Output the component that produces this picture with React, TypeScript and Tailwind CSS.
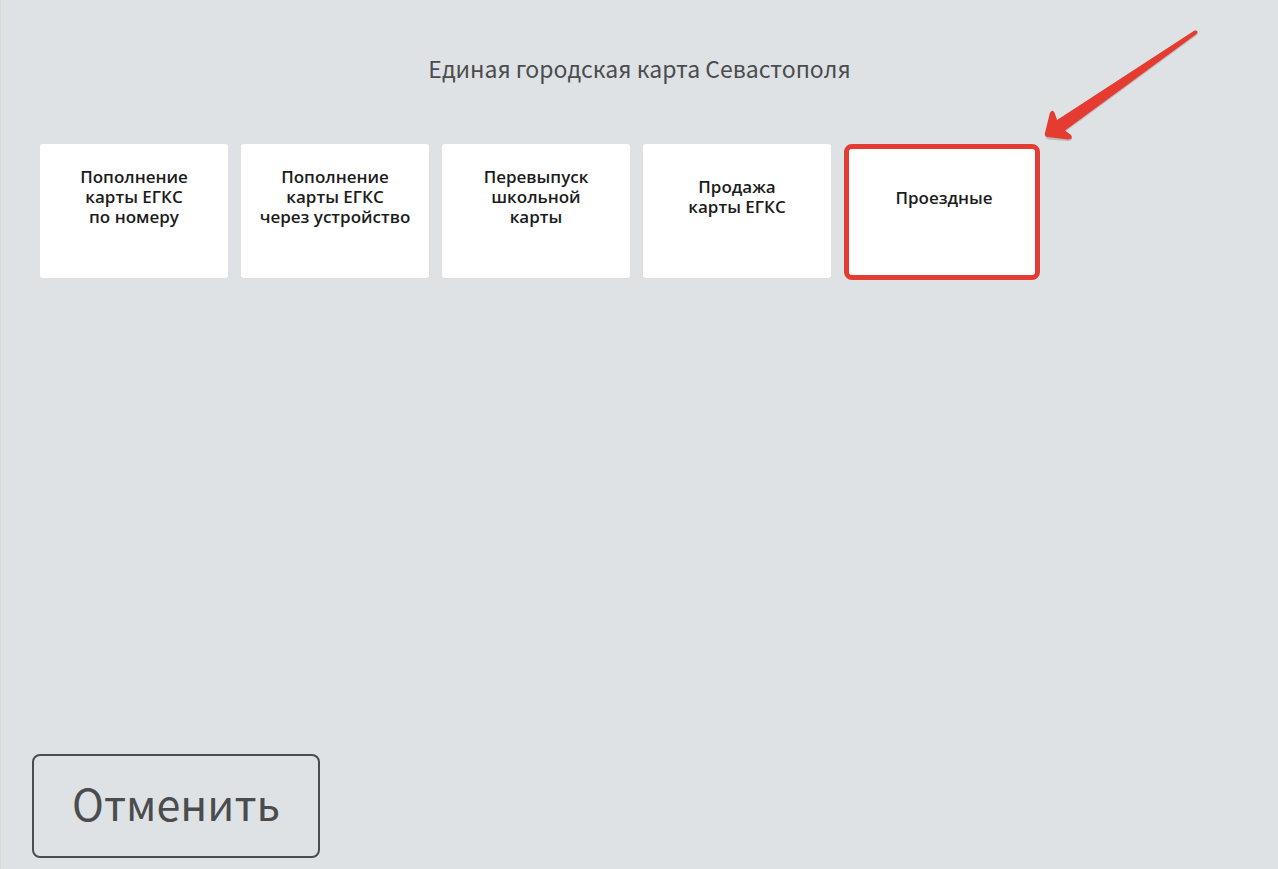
const services: { lines: string[]; highlighted?: boolean }[] = [
  { lines: ['Пополнение', 'карты ЕГКС', 'по номеру'] },
  { lines: ['Пополнение', 'карты ЕГКС', 'через устройство'] },
  { lines: ['Перевыпуск', 'школьной', 'карты'] },
  { lines: ['Продажа', 'карты ЕГКС'] },
  { lines: ['Проездные'], highlighted: true },
];

function Arrow() {
  return (
    <svg
      className="pointer-events-none absolute bottom-full left-full h-[114px] w-[160px]"
      viewBox="0 0 160 114"
      aria-hidden="true"
    >
      <path
        d="M154.500 0.500L17 91L14.500 83Q12.500 79 10 83L5 104Q4.500 107.500 8 108.500L28 110Q33.500 109.500 31 105L25 100.500L156.500 4Q159.500 0 154.500 0.500Z"
        fill="#9a8f8d"
        opacity="0.5"
        transform="translate(0.500 1)"
      />
      <path
        d="M154.500 0.500L17 90L14.500 82.500Q12.500 79 10 82.500L5 103Q4 106.500 7.500 107L28 109.500Q33.500 109 31 105L25 100.500L156.500 4Q159 0 154.500 0.500Z"
        fill="#e63b30"
      />
    </svg>
  );
}

function ServiceCard({ lines, highlighted }: { lines: string[]; highlighted?: boolean }) {
  return (
    <li className="relative">
      <button
        type="button"
        className={
          highlighted
            ? 'flex h-[136px] w-[196px] items-center justify-center rounded-lg border-5 border-[#e23c33] bg-white pb-7 pl-1 text-center'
            : 'flex h-[134px] w-[188px] items-center justify-center rounded-[3px] bg-white pb-7 text-center'
        }
      >
        <span>
          {lines.map((line) => (
            <span key={line} className="block whitespace-nowrap">
              {line}
            </span>
          ))}
        </span>
      </button>
      {highlighted && <Arrow />}
    </li>
  );
}

export default function App() {
  return (
    <main className="flex min-h-screen flex-col border-l border-[#d8dad8] bg-[#dee2e5] font-['Noto_Sans_CJK_SC','Noto_Sans',sans-serif] text-[#4b4c4e]">
      <h1 className="pt-[50px] text-center text-[23px] leading-9">
        Единая городская карта Севастополя
      </h1>
      <ul className="mt-[58px] flex flex-wrap gap-[13px] px-[39px] font-['Open_Sans','Noto_Sans',sans-serif] text-[17px] leading-5 font-semibold text-[#1c1c1c]">
        {services.map((service) => (
          <ServiceCard key={service.lines.join(' ')} {...service} />
        ))}
      </ul>
      <footer className="mt-auto px-[31px] pb-[11px]">
        <button
          type="button"
          className="rounded-lg border-2 border-[#4b4c4e] px-[38px] pt-4 pb-6 text-[43px] leading-[60px]"
        >
          Отменить
        </button>
      </footer>
    </main>
  );
}
